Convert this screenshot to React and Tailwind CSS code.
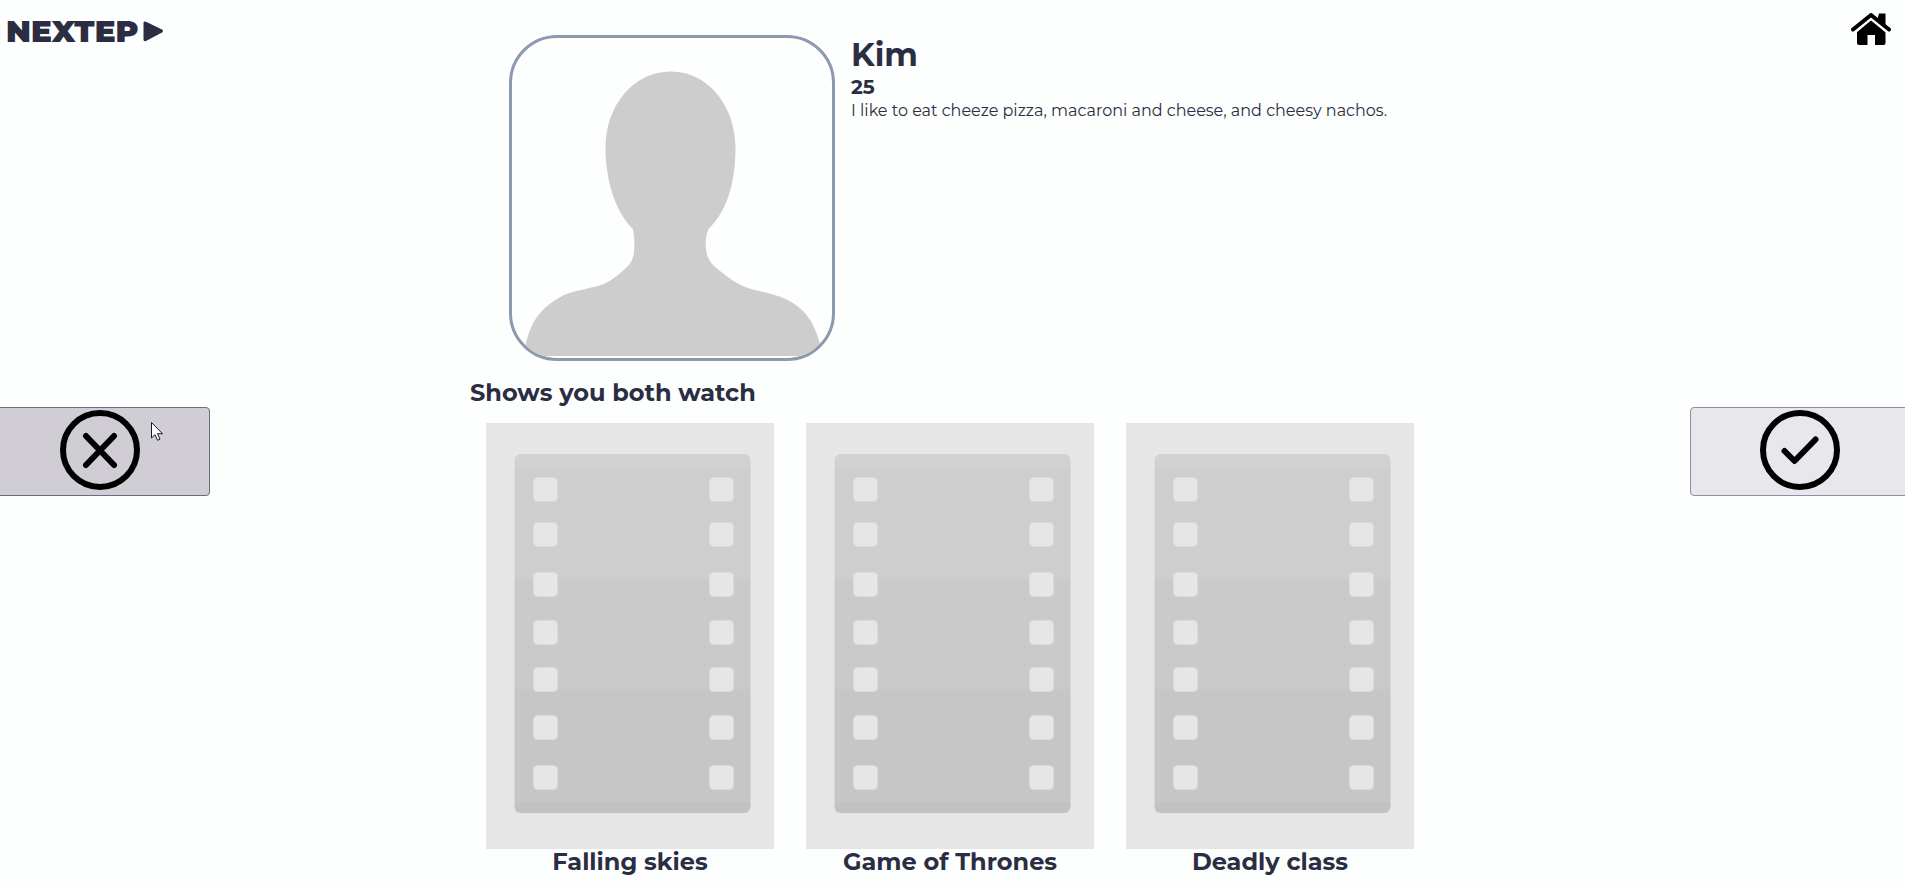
const shows = ['Falling skies', 'Game of Thrones', 'Deadly class']
const holeRows = [54, 99, 149, 197, 244, 292, 342]

function Avatar() {
  return (
    <svg viewBox="0 0 320 320" className="block size-full" role="img" aria-label="Profile photo">
      <path
        d="M159 33.500 C196 33.500 223.500 68 223.500 110 C223.500 147 214 174 196.500 191 C193.500 198 193.500 205 194 211 C194.500 217 197 223 202 228 C212 236 221 244 231 248 C242 253 256 254 269 259 C290 268 302 280 309 310 L309 318 L13 318 L13 310 C19 279 33 267 52 257 C67 251 78 251 92 246 C102 241 110 234 117 227 C122 221 122.500 214 122.300 202 L121 191 C104 175 93.500 143 93.500 110 C93.500 68 121 33.500 159 33.500 Z"
        fill="#cdcdcd"
      />
    </svg>
  )
}

function Poster() {
  return (
    <svg viewBox="0 0 288 426" className="block w-full" aria-hidden="true">
      <defs>
        <clipPath id="strip">
          <rect x="28.500" y="31" width="236" height="359" rx="6" />
        </clipPath>
      </defs>
      <rect width="288" height="426" fill="#e6e6e6" />
      <g clipPath="url(#strip)">
        <rect x="28" y="31" width="237" height="14" fill="#d2d2d2" />
        <rect x="28" y="45" width="237" height="112" fill="#cecece" />
        <rect x="28" y="157" width="237" height="109" fill="#cacaca" />
        <rect x="28" y="266" width="237" height="113" fill="#c6c6c6" />
        <rect x="28" y="379" width="237" height="12" fill="#c2c2c2" />
      </g>
      {holeRows.map((y) => (
        <g key={y} fill="#e6e6e6" stroke="#dadada">
          <rect x="47.500" y={y + 0.5} width="24" height="24" rx="4" />
          <rect x="223.500" y={y + 0.5} width="24" height="24" rx="4" />
        </g>
      ))}
    </svg>
  )
}

function CircleIcon({ children }) {
  return (
    <svg viewBox="0 0 80 80" className="size-20" fill="none" stroke="#000" strokeWidth="6" strokeLinecap="round" strokeLinejoin="round" aria-hidden="true">
      <circle cx="40" cy="40" r="37" />
      {children}
    </svg>
  )
}

export default function App() {
  return (
    <div className="relative flex min-h-screen justify-between overflow-hidden bg-[#fdfefe] font-[Montserrat,Inter,sans-serif] text-[#2b2d42]">
      <aside className="flex w-[210px] shrink-0 flex-col">
        <a href="#" className="flex h-[62px] items-center gap-1 pl-[6px] text-[31px] leading-8 font-black">
          NEXTEP
          <svg viewBox="0 0 21 21" className="size-[21px]" aria-hidden="true">
            <path d="M0.500 2 Q0.500 0 3 0.800 L19 8.500 Q21 10 19 11.500 L3 20 Q0.500 21 0.500 18.500 Z" fill="currentColor" />
          </svg>
        </a>
        <button aria-label="Skip" className="mt-[345px] -ml-[10px] flex h-[89px] w-[220px] items-start justify-center rounded border border-[#6a6d80] bg-[#d0ced4] pt-[2px]">
          <CircleIcon>
            <path d="M26 26 L54 55 M54 26 L26 55" />
          </CircleIcon>
        </button>
      </aside>

      <main className="w-[960px] pt-[35px]">
        <section className="flex gap-4 pl-[39px]">
          <div className="size-[326px] shrink-0 overflow-hidden rounded-[48px] border-3 border-[#8d99ae]">
            <Avatar />
          </div>
          <div>
            <h1 className="text-[32px] leading-10 font-bold">Kim</h1>
            <h2 className="text-xl leading-6 font-bold">25</h2>
            <p className="text-base leading-6">I like to eat cheeze pizza, macaroni and cheese, and cheesy nachos.</p>
          </div>
        </section>
        <section>
          <h2 className="pt-4 pb-[14px] text-2xl font-bold">Shows you both watch</h2>
          <ul className="grid grid-cols-3">
            {shows.map((name) => (
              <li key={name} className="px-4">
                <Poster />
                <h3 className="text-center text-2xl leading-[26px] font-bold">{name}</h3>
              </li>
            ))}
          </ul>
        </section>
      </main>

      <aside className="flex w-[215px] shrink-0 flex-col">
        <div className="flex h-[58px] items-center justify-end pr-[14px]">
          <a href="#" aria-label="Home">
            <svg viewBox="0 0 40 32" className="block h-8 w-10" aria-hidden="true">
              <path d="M20 7 L34.500 19 V30 Q34.500 32 32.500 32 H24 V22 H16.500 V32 H8 Q6 32 6 30 V19 Z" />
              <path d="M4.500 19.200 L20 6.400 L35.500 19.200" fill="none" stroke="#fdfefe" strokeWidth="1.500" />
              <path d="M28 0.500 H34.500 V14 L31 13 L26 8 Z" />
              <path d="M2 16.500 L20 2 L38 16.500" fill="none" stroke="#000" strokeWidth="4" strokeLinecap="round" strokeLinejoin="round" />
            </svg>
          </a>
        </div>
        <button aria-label="Accept" className="mt-[349px] flex h-[89px] w-[220px] items-start justify-center rounded border border-[#8d90a5] bg-[#e8e7eb] pt-[2px]">
          <CircleIcon>
            <path d="M24.500 41 L34.500 51 L55.500 29.500" />
          </CircleIcon>
        </button>
      </aside>

      <svg viewBox="0 0 12 19" className="pointer-events-none absolute top-[422px] left-[151px] h-[19px] w-3" aria-hidden="true">
        <path d="M0.500 0.500 V16 L4 12.700 L6.500 18.300 L9 17.200 L6.500 11.700 H11.500 Z" fill="#fff" stroke="#1a1a2a" />
      </svg>
    </div>
  )
}
